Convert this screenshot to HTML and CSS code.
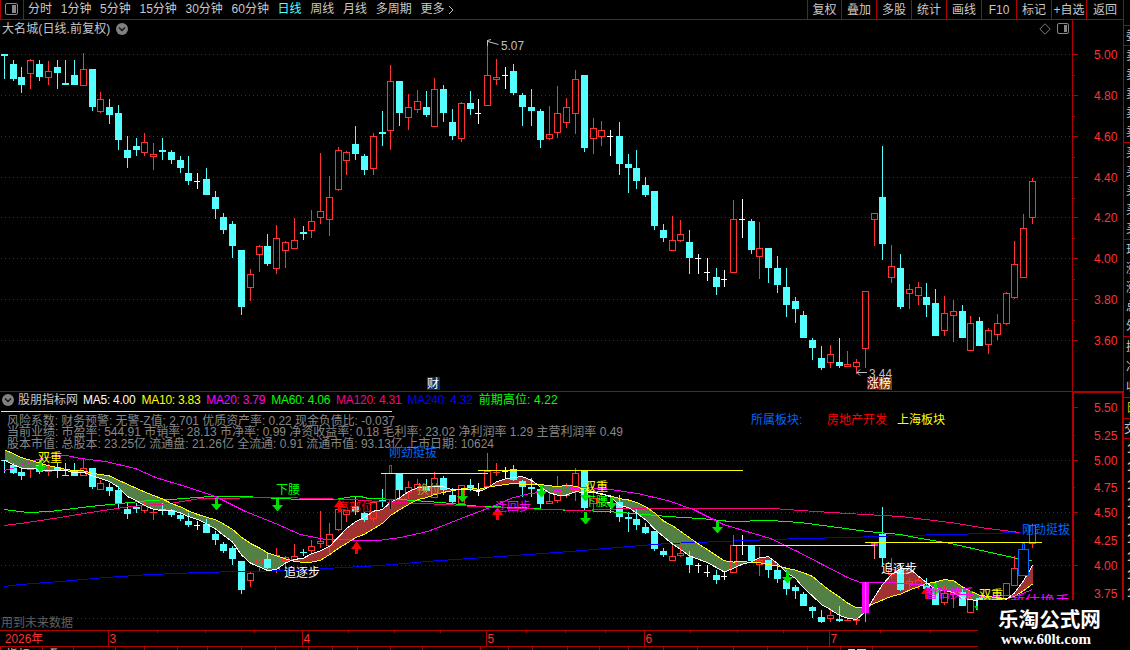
FILE: index.html
```
<!DOCTYPE html>
<html lang="zh-CN">

<head>
    <meta charset="UTF-8">
    <meta name="viewport" content="width=device-width, initial-scale=1.0">
    <title>大名城 日线</title>
    <link rel="stylesheet" href="styles.css">
</head>

<body>
    <div class="app">
        <main class="main">
            <header class="toolbar">
                <div class="layout-btn">
                    <svg width="13" height="12" viewBox="0 0 13 12">
                        <rect x="0.5" y="0.5" width="12" height="11" rx="1.5" fill="none" stroke="#888" />
                        <rect x="7" y="2" width="4" height="8" fill="#888" />
                    </svg>
                </div>
                <nav class="periods">
                    <span>分时</span>
                    <span>1分钟</span>
                    <span>5分钟</span>
                    <span>15分钟</span>
                    <span>30分钟</span>
                    <span>60分钟</span>
                    <span class="active">日线</span>
                    <span>周线</span>
                    <span>月线</span>
                    <span>多周期</span>
                    <span>更多</span>
                </nav>
                <svg class="more" width="6" height="10" viewBox="0 0 6 10">
                    <path d="M1 1L5 5L1 9" fill="none" stroke="#c0c0c0" />
                </svg>
                <div class="tools">
                    <span>复权</span>
                    <span>叠加</span>
                    <span>多股</span>
                    <span>统计</span>
                    <span>画线</span>
                    <span>F10</span>
                    <span>标记</span>
                    <span>+自选</span>
                    <span>返回</span>
                </div>
            </header>

            <section class="pane pane-price">
                <div class="pane-left">
                    <div class="pane-title">
                        <span class="stock">大名城(日线.前复权)</span>
                        <svg width="12" height="12" viewBox="0 0 12 12">
                            <circle cx="6" cy="6" r="6" fill="#808080" />
                            <path d="M3 4.5L6 7.5L9 4.5" fill="none" stroke="#111" stroke-width="1.3" />
                        </svg>
                        <svg class="title-icons" width="31" height="12" viewBox="0 0 31 12">
                            <path d="M6 0.8L11.2 6L6 11.2L0.8 6Z" fill="none" stroke="#888" stroke-width="0.9" />
                            <rect x="18.5" y="0.5" width="11" height="10" rx="1.5" fill="none" stroke="#888" />
                            <rect x="25" y="2" width="3" height="7" fill="#888" />
                        </svg>
                    </div>
                    <svg id="price" width="1072" height="353" viewBox="0 38 1072 353"></svg>
                </div>
                <svg id="priceAxis" width="51" height="371" viewBox="1072 20 51 371"></svg>
            </section>

            <section class="pane pane-indicator">
                <div class="pane-left">
                    <div class="legend">
                        <svg width="12" height="12" viewBox="0 0 12 12">
                            <circle cx="6" cy="6" r="6" fill="#808080" />
                            <path d="M3 4.5L6 7.5L9 4.5" fill="none" stroke="#111" stroke-width="1.3" />
                        </svg>
                        <span class="legend-name">股朋指标网</span>
                        <span class="ma5">MA5: 4.00</span>
                        <span class="ma10">MA10: 3.83</span>
                        <span class="ma20">MA20: 3.79</span>
                        <span class="ma60">MA60: 4.06</span>
                        <span class="ma120">MA120: 4.31</span>
                        <span class="ma240">MA240: 4.32</span>
                        <span class="peak">前期高位: 4.22</span>
                    </div>
                    <svg id="indicator" width="1072" height="222" viewBox="0 408 1072 222"></svg>
                </div>
                <svg id="indicatorAxis" width="51" height="238" viewBox="1072 392 51 238"></svg>
            </section>

            <svg id="timeline" width="1123" height="20" viewBox="0 630 1123 20"></svg>
        </main>

        <aside class="quotes">
            <div class="q-empty"></div>
            <div class="q-group q-ratio"><span>委</span></div>
            <div class="q-group"><span>卖</span><span>卖</span><span>卖</span><span>卖</span><span>卖</span></div>
            <div class="q-group"><span>买</span><span>买</span><span>买</span><span>买</span><span>买</span></div>
            <div class="q-group"><span>现</span><span>涨</span><span>涨</span><span>总</span><span>外</span></div>
            <div class="q-group q-three"><span>换</span><span>净</span><span>收</span></div>
            <div class="q-group q-tab"><span>日</span></div>
            <div class="q-group q-tab2"><span>交</span></div>
            <div class="q-ticks"><b>1</b><b>1</b><b>1</b><b>1</b><b>1</b><b>1</b><b>1</b><b>1</b><b>1</b></div>
        </aside>

        <div class="watermark">
            <div class="wm-name">乐淘公式网</div>
            <div class="wm-url">www.60lt.com</div>
        </div>
    </div>

    <script src="chart.js"></script>
</body>

</html>
```

FILE: styles.css
```
body {
    margin: 0;
    background-color: #000;
    color: #c8c8c8;
    font-family: "Liberation Sans", "Noto Sans CJK SC", sans-serif;
    font-size: 12px;
    overflow: hidden;
}

svg {
    display: block;
    flex: none;
}

svg text {
    font-family: "Liberation Sans", "Noto Sans CJK SC", sans-serif;
    font-size: 12px;
}

.app {
    position: relative;
    display: flex;
    width: 1130px;
    height: 650px;
    overflow: hidden;
}

.main {
    width: 1123px;
    flex: none;
}

/* toolbar */
.toolbar {
    display: flex;
    align-items: center;
    height: 19px;
    border-bottom: 1px solid #b00000;
    white-space: nowrap;
}

.layout-btn {
    box-sizing: border-box;
    width: 24px;
    height: 19px;
    padding: 3px 0 0 4px;
    border-left: 1px solid #b00000;
    border-right: 1px solid #b00000;
}

.periods {
    display: flex;
    gap: 8.7px;
    margin-left: 4px;
    line-height: 19px;
}

.periods .active {
    color: #54ffff;
}

.more {
    margin-left: 4px;
}

.tools {
    display: flex;
    margin-left: auto;
}

.tools span {
    box-sizing: border-box;
    width: 35px;
    height: 19px;
    line-height: 20px;
    text-align: center;
    border-left: 1px solid #b00000;
}

.tools span:first-child {
    width: 34px;
}

.tools span:last-child {
    width: 37px;
}

/* chart panes */
.pane {
    display: flex;
}

.pane-price {
    height: 371px;
    border-bottom: 1px solid #b00000;
}

.pane-indicator {
    height: 238px;
}

.pane-left {
    width: 1072px;
    flex: none;
}

.pane-title {
    display: flex;
    align-items: center;
    height: 18px;
    padding-left: 2px;
    line-height: 20px;
    gap: 4px;
}

.stock {
    width: 110px;
    letter-spacing: 0.1px;
    white-space: nowrap;
}

.title-icons {
    margin-left: auto;
    margin-right: 2px;
}

.legend {
    display: flex;
    align-items: center;
    height: 16px;
    padding-left: 2px;
    gap: 6px;
    line-height: 16px;
    letter-spacing: -0.25px;
    white-space: nowrap;
}

.legend-name {
    margin-left: -2px;
    margin-right: -1px;
    letter-spacing: 0;
}

.ma5 {
    color: #fff;
}

.ma10 {
    color: #ff0;
}

.ma20 {
    color: #f0f;
}

.ma60,
.peak {
    color: #0f0;
}

.peak {
    letter-spacing: 0.1px;
}

.ma120 {
    color: #ff0080;
}

.ma240 {
    color: #0000ff;
}

/* quote column, mostly cut off by the window edge */
.quotes {
    box-sizing: border-box;
    width: 7px;
    height: 650px;
    border-left: 1px solid #b00000;
    overflow: hidden;
}

.q-empty {
    height: 25px;
}

.q-group {
    box-sizing: border-box;
    display: flex;
    flex-direction: column;
    justify-content: space-around;
    height: 97px;
    padding-left: 2px;
    line-height: 18px;
    border-top: 1px solid #b00000;
}

.q-ratio {
    height: 20px;
}

.q-three {
    height: 61px;
}

.q-tab {
    height: 21px;
    color: #c8c800;
}

.q-tab2 {
    height: 20px;
    padding-left: 0;
}

.q-ticks {
    padding-top: 1px;
    border-top: 1px solid #b00000;
}

.q-ticks b {
    display: block;
    padding-left: 3px;
    height: 18px;
    line-height: 18px;
    font-size: 13px;
}

.watermark {
    position: absolute;
    left: 978px;
    top: 600px;
    width: 152px;
    height: 50px;
    background-color: #000;
    color: #fff;
}

.wm-name {
    margin-top: 7px;
    padding-left: 20px;
    height: 24px;
    line-height: 25px;
    font-size: 20.6px;
    font-weight: bold;
}

.wm-url {
    padding-left: 23px;
    line-height: 16px;
    font-family: "Liberation Serif", serif;
    font-weight: bold;
    font-size: 15px;
}
```

FILE: chart.js
```
// kind, centre x, high, body top, body bottom, low (upper pane pixels)
var bars = [
    ['c', 4, 54, 54, 56, 79], ['c', 13, 60, 64, 79, 81], ['c', 21, 67, 77, 85, 93], ['r', 30, 59, 60, 74, 89],
    ['c', 39, 60, 64, 77, 81], ['r', 48, 61, 71, 78, 85], ['c', 57, 60, 67, 73, 89], ['c', 65, 60, 83, 85, 85],
    ['c', 74, 60, 75, 85, 85], ['r', 83, 53, 69, 86, 86], ['c', 92, 69, 69, 107, 111], ['r', 100, 92, 99, 112, 113],
    ['c', 109, 99, 107, 115, 124], ['c', 118, 105, 113, 140, 150], ['c', 127, 136, 150, 158, 168],
    ['c', 136, 138, 146, 150, 156], ['r', 144, 133, 142, 153, 156], ['r', 153, 143, 154, 157, 170],
    ['c', 162, 138, 150, 152, 160], ['c', 171, 150, 152, 160, 164], ['c', 180, 156, 160, 168, 173],
    ['c', 188, 156, 173, 181, 185], ['w', 197, 173, 181, 181, 189], ['c', 206, 168, 179, 195, 195],
    ['c', 215, 191, 197, 209, 219], ['c', 223, 213, 217, 230, 234], ['c', 232, 221, 224, 246, 258],
    ['c', 241, 250, 250, 307, 315], ['r', 250, 269, 274, 288, 301], ['r', 259, 245, 246, 255, 272],
    ['c', 267, 234, 246, 264, 266], ['r', 276, 225, 238, 269, 274], ['r', 285, 241, 242, 251, 268],
    ['r', 294, 218, 240, 249, 249], ['c', 303, 226, 232, 234, 240], ['r', 311, 210, 221, 231, 238],
    ['r', 320, 153, 211, 218, 224], ['r', 329, 176, 197, 220, 236], ['r', 338, 147, 150, 190, 191],
    ['r', 346, 151, 152, 161, 175], ['c', 355, 126, 144, 154, 160], ['c', 364, 154, 156, 170, 175],
    ['r', 373, 133, 136, 169, 175], ['c', 382, 111, 132, 134, 146], ['r', 390, 65, 81, 131, 150],
    ['c', 399, 81, 81, 113, 126], ['r', 408, 94, 107, 118, 130], ['r', 417, 90, 101, 110, 113],
    ['c', 426, 91, 107, 115, 117], ['r', 434, 78, 89, 127, 127], ['c', 443, 85, 89, 113, 122],
    ['c', 452, 109, 122, 136, 140], ['r', 461, 102, 103, 139, 142], ['c', 470, 91, 103, 109, 115],
    ['w', 478, 99, 113, 113, 124], ['r', 487, 40, 75, 106, 106], ['r', 496, 59, 77, 80, 85],
    ['w', 505, 67, 75, 75, 89], ['c', 513, 64, 71, 93, 95], ['c', 522, 93, 95, 107, 126],
    ['c', 531, 89, 107, 111, 126], ['c', 540, 109, 111, 140, 148], ['r', 549, 106, 134, 139, 140],
    ['r', 557, 86, 113, 133, 138], ['r', 566, 98, 107, 123, 128], ['r', 575, 70, 79, 114, 134],
    ['c', 584, 75, 75, 148, 152], ['r', 593, 118, 128, 139, 154], ['r', 601, 121, 130, 137, 146],
    ['w', 610, 130, 136, 136, 156], ['c', 619, 122, 136, 164, 175], ['c', 628, 154, 164, 168, 193],
    ['c', 636, 150, 168, 181, 189], ['c', 645, 177, 185, 195, 197], ['c', 654, 191, 191, 226, 230],
    ['c', 663, 224, 230, 238, 242], ['r', 672, 216, 240, 251, 251], ['r', 680, 220, 234, 241, 242],
    ['c', 689, 230, 242, 258, 274], ['w', 698, 254, 258, 258, 274], ['w', 707, 258, 272, 272, 281],
    ['c', 716, 268, 277, 287, 295], ['w', 724, 270, 279, 279, 287], ['r', 733, 200, 219, 273, 273],
    ['w', 742, 199, 219, 219, 238], ['c', 751, 219, 221, 250, 254], ['r', 759, 222, 248, 257, 279],
    ['c', 768, 248, 248, 268, 283], ['c', 777, 256, 268, 285, 293], ['c', 786, 268, 287, 305, 317],
    ['c', 795, 297, 301, 309, 323], ['c', 803, 311, 315, 338, 338], ['c', 812, 338, 340, 348, 360],
    ['c', 821, 346, 358, 368, 370], ['r', 830, 345, 354, 363, 368], ['c', 839, 338, 362, 366, 368],
    ['r', 847, 351, 364, 367, 367], ['r', 856, 359, 362, 367, 374], ['r', 865, 291, 291, 349, 368],
    ['r', 874, 213, 213, 220, 246], ['c', 882, 146, 197, 244, 260], ['r', 891, 245, 266, 278, 283],
    ['c', 900, 254, 268, 307, 309], ['r', 909, 284, 289, 294, 309], ['r', 918, 282, 287, 296, 305],
    ['c', 926, 283, 297, 305, 317], ['c', 935, 289, 303, 336, 336], ['r', 944, 296, 313, 331, 336],
    ['r', 953, 300, 311, 316, 342], ['c', 962, 305, 311, 338, 338], ['r', 970, 316, 323, 351, 351],
    ['c', 979, 317, 321, 346, 346], ['r', 988, 328, 330, 345, 354], ['r', 997, 314, 323, 335, 340],
    ['r', 1006, 292, 293, 324, 325], ['r', 1014, 241, 264, 298, 299], ['r', 1023, 214, 228, 278, 278],
    ['r', 1032, 178, 181, 218, 224]
];
var colors = { c: '#54ffff', r: '#ff3232', w: '#ffffff' };
var LINE = '#b00000';
var LABEL = '#ff3232';

function rect(x, y, w, h, fill) {
    return `<rect x="${x}" y="${y}" width="${w}" height="${h}" fill="${fill}" shape-rendering="crispEdges"/>`;
}

// hollow box made of four filled edges
function box(x, y, w, h, color, fill) {
    var out = fill ? rect(x, y, w, h, fill) : '';
    return out + rect(x, y, w, 1, color) + rect(x, y + h - 1, w, 1, color) + rect(x, y, 1, h, color) + rect(x + w - 1, y, 1, h, color);
}

function text(x, y, str, fill, len) {
    var fit = len ? ` textLength="${len}" lengthAdjust="spacingAndGlyphs"` : '';
    return `<text x="${x}" y="${y}" fill="${fill}"${fit}>${str}</text>`;
}

function line(points, color) {
    return `<polyline points="${points.map(p => (p[0] + 0.5) + ',' + (p[1] + 0.5)).join(' ')}" fill="none" stroke="${color}" shape-rendering="crispEdges"/>`;
}

function grid(y) {
    return `<line x1="1" x2="1072" y1="${y + 0.5}" y2="${y + 0.5}" stroke="#b00000" stroke-dasharray="1 3" shape-rendering="crispEdges"/>`;
}

// price pane pixel -> indicator pane pixel
function low(y) {
    return 460 + (y - 54) * 0.5152;
}

function candle(bar, map) {
    var kind = bar[0], x = bar[1], color = colors[kind];
    var v = bar.slice(2).map(n => Math.round(map(n)));
    var hi = v[0], top = v[1], bottom = v[2], lo = v[3];
    if (kind === 'w') {
        return rect(x, hi, 1, lo - hi, color) + rect(x - 3, top, 6, 1, color);
    }
    var h = Math.max(bottom - top, 1);
    if (kind === 'c') {
        return rect(x, hi, 1, lo - hi, color) + rect(x - 3, top, 7, h, color);
    }
    var out = rect(x, hi, 1, Math.max(top - hi, 0), color) + rect(x, bottom, 1, Math.max(lo - bottom, 0), color);
    return out + (h < 3 ? rect(x - 3, top, 7, h, color) : box(x - 3, top, 7, h, color));
}

function drawPrice() {
    var out = [54, 95, 136, 177, 217, 258, 299, 340].map(grid).join('');
    out += bars.map(b => candle(b, n => n)).join('');
    out += '<path d="M498.5 44.5L488 41.5M487.5 46V40M487.5 40.5L491 39.5" fill="none" stroke="#c0c0c0"/>';
    out += text(501, 50, '5.07', '#c0c0c0', 23);
    out += '<path d="M867 372.5H857M860 369.5L857 372.5L860 375.5" fill="none" stroke="#c0c0c0"/>';
    out += text(869, 378, '3.44', '#c0c0c0', 23);
    out += rect(427, 377, 13, 13, '#003264') + text(427, 388, '财', '#fff');
    out += rect(867, 377, 12, 13, '#800000') + text(867, 388, '涨', '#fff');
    out += rect(879, 377, 13, 13, '#804000') + text(879, 388, '榜', '#fff');
    document.getElementById('price').innerHTML = out;
}

function drawAxes() {
    var out = rect(1072, 20, 1, 371, LINE);
    [54, 95, 136, 177, 217, 258, 299, 340].forEach(function (y, i) {
        out += rect(1073, y, 5, 1, LINE);
        if (i < 7) {
            out += rect(1073, y + 21, 2, 1, LINE);
        }
        out += text(1094, y + 5, (5 - i * 0.2).toFixed(2), LABEL, 23.5);
    });
    document.getElementById('priceAxis').innerHTML = out;

    out = rect(1072, 392, 51, 1, LINE) + rect(1072, 392, 2, 238, LINE) + rect(1122, 392, 1, 238, LINE);
    [407, 435, 460, 487, 512, 540, 565, 593].forEach(function (y, i) {
        out += rect(1074, y, i % 2 ? 1 : 4, 1, LINE);
        out += text(1094, y + 5, (5.5 - i * 0.25).toFixed(2), LABEL, 23.5);
    });
    document.getElementById('indicatorAxis').innerHTML = out;
}

function average(values, end, n) {
    return values.slice(end - n + 1, end + 1).reduce((a, b) => a + b, 0) / n;
}

// ribbon between MA5 and MA10, split where they cross
function ribbon(fast, slow) {
    var out = '';
    for (var i = 1; i < fast.length; i++) {
        var a = fast[i - 1], b = fast[i], c = slow[i - 1], d = slow[i];
        var d0 = a[1] - c[1], d1 = b[1] - d[1];
        if (d0 * d1 < 0) {
            var t = d0 / (d0 - d1);
            var m = [a[0] + (b[0] - a[0]) * t, a[1] + (b[1] - a[1]) * t];
            out += area([a, m, c], d0) + area([m, b, d], d1);
        } else {
            out += area([a, b, d, c], d0 + d1);
        }
    }
    return out;
}

function area(points, diff) {
    return `<polygon points="${points.map(p => (p[0] + 0.5) + ',' + (p[1] + 0.5)).join(' ')}" fill="${diff > 0 ? '#548046' : '#a03232'}" shape-rendering="crispEdges"/>`;
}

function arrowDown(x, y) {
    return `<path d="M${x - 1} ${y}h3v6h4l-5 6h-1l-5 -6h4z" fill="#00e000"/>`;
}

function arrowUp(x, y) {
    return `<path d="M${x} ${y}h1l5 7h-4v5h-3v-5h-4z" fill="#ff0000"/>`;
}

function drawIndicator() {
    var out = [460, 512, 565, 618].map(grid).join('');

    var closes = [5, 8, 12, 18, 22, 38, 50, 60, 65];
    bars.forEach(b => closes.push(b[0] === 'c' ? b[4] : b[3]));
    var ma5 = [], ma10 = [];
    bars.forEach(function (b, i) {
        ma5.push([b[1], low(average(closes, i + 9, 5))]);
        ma10.push([b[1], low(average(closes, i + 9, 10))]);
    });

    out += ribbon(ma5, ma10);
    bars.forEach(function (b) {
        if (b[1] === 390 || b[1] === 865 || b[1] === 874 || b[1] === 1023) {
            return;
        }
        out += candle(b, low);
    });

    out += line([[4, 586], [20, 584], [60, 581], [105, 577], [150, 574], [200, 572], [240, 571], [300, 570], [325, 568], [380, 565], [440, 560], [500, 556], [570, 551], [628, 546], [667, 543], [720, 541], [800, 538], [850, 537], [900, 535], [950, 534], [1022, 532]], '#0000ff');
    out += line([[4, 509], [27, 512], [50, 511], [90, 506], [130, 502], [150, 500], [170, 499], [210, 496], [245, 496], [260, 497], [300, 499], [335, 499], [352, 496], [360, 496], [368, 498], [400, 499], [440, 502], [480, 506], [520, 507], [547, 509], [607, 511], [633, 513], [667, 516], [700, 518], [730, 521], [770, 520], [800, 522], [830, 526], [867, 531], [900, 534], [920, 538], [950, 543], [990, 552], [1017, 558], [1032, 560]], '#00ff00');
    out += line([[4, 525], [20, 523], [60, 517], [90, 512], [130, 506], [170, 503], [200, 498], [280, 497], [350, 499], [393, 502], [447, 504], [473, 506], [517, 508], [580, 510], [628, 508], [773, 508], [800, 510], [847, 513], [900, 516], [950, 522], [987, 528], [1019, 532]], '#ff0080');
    out += line([[4, 470], [15, 467], [30, 461], [45, 457], [66, 455], [80, 458], [105, 461], [135, 468], [155, 477], [185, 486], [215, 496], [245, 511], [275, 523], [300, 534], [325, 539], [378, 540], [400, 537], [427, 531], [443, 525], [463, 517], [487, 508], [513, 497], [530, 493], [557, 490], [583, 487], [603, 488], [637, 493], [667, 500], [693, 509], [723, 524], [753, 533], [770, 538], [797, 551], [820, 563], [847, 577], [860, 582], [888, 582], [903, 583], [930, 585], [955, 593], [983, 596], [1017, 595], [1032, 589]], '#ff00ff');
    out += line(ma10, '#ffff00') + line(ma5, '#ffffff');

    // signal bars
    out += box(385, 473, 11, 27, '#0066ff', '#000') + box(389, 465, 3, 9, '#0066ff', '#000') + box(389, 499, 3, 11, '#0066ff', '#000');
    out += box(1022, 543, 3, 7, '#0066ff', '#000') + box(1018, 549, 11, 27, '#0066ff', '#000');
    out += rect(862, 582, 7, 31, '#ff00ff') + rect(865, 582, 1, 40, '#ff8080');
    out += rect(871, 543, 7, 3, '#ff00ff') + rect(874, 543, 1, 16, '#ff8080');

    // previous-high levels
    out += rect(1, 411, 391, 1, '#ffff00') + rect(381, 473, 107, 1, '#ffff00') + rect(478, 470, 265, 1, '#ffff00');
    out += rect(733, 545, 142, 1, '#ffff00') + rect(865, 542, 177, 1, '#ffff00');

    out += arrowDown(40, 460) + arrowDown(216, 498) + arrowDown(277, 499) + arrowDown(462, 490) + arrowDown(541, 485);
    out += arrowDown(585, 489) + arrowDown(585, 512) + arrowDown(611, 497) + arrowDown(717, 521) + arrowDown(787, 571) + arrowDown(935, 583) + arrowDown(979, 600);
    out += arrowUp(339, 500) + arrowUp(356, 542) + arrowUp(497, 508) + arrowUp(926, 587);

    out += text(7, 425, '风险系数: 财务预警: 无警-Z值: 2.701 优质资产率: 0.22 现金负债比: -0.037', '#888', 388);
    out += text(7, 436, '当前业绩: 市盈率: 544.91 市销率: 28.13 市净率: 0.99 净资收益率: 0.18 毛利率: 23.02 净利润率 1.29 主营利润率 0.49', '#888', 616);
    out += text(7, 448, '股本市值: 总股本: 23.25亿 流通盘: 21.26亿 全流通: 0.91 流通市值: 93.13亿 上市日期: 10624', '#888', 487);
    out += text(751, 424, '所属板块:', '#0066ff') + text(827, 424, '房地产开发', '#ff0000') + text(897, 424, '上海板块', '#ffff00');

    out += text(38, 462, '双重', '#ffff00') + text(276, 494, '下腰', '#00ff00') + text(284, 577, '追逐步', '#fff');
    out += text(389, 457, '刚劲挺拔', '#0066ff') + text(337, 512, '高部位', '#ff0000') + text(417, 494, '换位', '#a0a032');
    out += text(495, 511, '迂回步', '#ff00ff') + text(584, 491, '双重', '#ffff00') + text(584, 506, '下腰', '#00ff00');
    out += text(881, 573, '追逐步', '#fff') + text(926, 598, '暂估换手', '#ff00ff') + text(979, 599, '双重', '#ffff00');
    out += text(1010, 605, '暂估换手', '#ff00ff', 60) + text(1022, 534, '刚劲挺拔', '#0066ff');
    out += text(1, 627, '用到未来数据', '#606060');
    document.getElementById('indicator').innerHTML = out;
}

function drawTimeline() {
    var out = rect(0, 630, 1123, 1, LINE) + rect(0, 646, 1123, 1, LINE);
    out += text(5, 643, '2026年', LABEL, 38);
    [[108, '3'], [302, '4'], [486, '5'], [644, '6'], [829, '7']].forEach(function (m) {
        out += rect(m[0], 631, 1, 15, LINE) + text(m[0] + 1.5, 643, m[1], LABEL);
    });
    [157, 205, 254, 348, 394, 440, 526, 565, 605, 690, 737, 783, 880, 930].forEach(x => out += rect(x, 631, 1, 2, LINE));
    [0, 42, 73, 115, 144, 177, 207, 241, 275, 308, 332, 357, 390, 422, 480, 508, 532, 567, 599, 628, 663, 697, 733, 767, 807, 840, 872].forEach(x => out += rect(x, 647, 1, 3, LINE));
    out += text(6, 659, '指标', '#c0c0c0') + text(48, 659, '叠', '#c0c0c0') + text(828, 659, '+', '#fff') + rect(848, 649, 7, 1, '#54ffff') + rect(857, 649, 9, 1, '#54ffff');
    document.getElementById('timeline').innerHTML = out;
}

drawPrice();
drawAxes();
drawIndicator();
drawTimeline();
```
